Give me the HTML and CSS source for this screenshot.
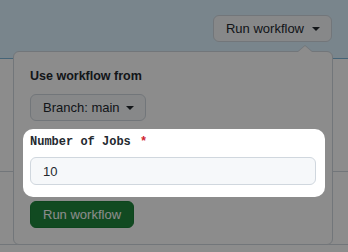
FILE: index.html
```html
<!DOCTYPE html>
<html>
<head>
    <title>Run workflow</title>
    <link rel="stylesheet" href="styles.css">
</head>
<body>
    <div class="flash-header">
        <button class="btn">Run workflow <span class="caret"></span></button>
    </div>

    <div class="run-list">
        <div class="run-row tall"></div>
        <div class="run-row"></div>
    </div>

    <!-- dropdown opened from the Run workflow button -->
    <div class="workflow-menu">
        <div class="menu-title">Use workflow from</div>
        <button class="btn branch-btn">Branch: main <span class="caret"></span></button>

        <div class="spotlight">
            <label class="field-label" for="jobs">Number of Jobs <span class="required">*</span></label>
            <input class="field-input" id="jobs" type="text" value="10">
        </div>

        <button class="btn btn-primary">Run workflow</button>
    </div>
</body>
</html>
```

FILE: styles.css
```css
body {
    font-family: "Liberation Sans", Arial, sans-serif;
    margin: 0;
    padding: 0;
    background: #fff;
    color: #24292f;
    height: 252px;
    overflow: hidden;
}

.flash-header {
    height: 59px;
    background: #dcf2ff;
    border-bottom: 1px solid #7fb6d9;
    display: flex;
    justify-content: flex-end;
    align-items: flex-start;
    padding: 15px 16px 0 0;
    box-sizing: border-box;
}

.btn {
    font-family: inherit;
    font-size: 13px;
    color: #24292f;
    background: #f6f8fa;
    border: 1px solid #d0d7de;
    border-radius: 6px;
    height: 27px;
    padding: 0 11px 0 12px;
    display: inline-flex;
    align-items: center;
    gap: 8px;
    cursor: pointer;
}

.caret {
    width: 0;
    height: 0;
    border-top: 4px solid #24292f;
    border-left: 4px solid transparent;
    border-right: 4px solid transparent;
}

.run-row {
    height: 72px;
    border-bottom: 1px solid #d0d7de;
}

.run-row.tall {
    height: 112px;
}

.workflow-menu {
    position: absolute;
    top: 51px;
    left: 13px;
    width: 320px;
    height: 194px;
    box-sizing: border-box;
    background: #fff;
    border: 1px solid #d0d7de;
    border-radius: 6px;
    padding: 16px 16px 15px 16px;
    display: flex;
    flex-direction: column;
    align-items: flex-start;
}

.workflow-menu::before,
.workflow-menu::after {
    content: "";
    position: absolute;
    right: 20px;
    width: 0;
    height: 0;
    border-left: 7px solid transparent;
    border-right: 7px solid transparent;
}

.workflow-menu::before {
    top: -7px;
    border-bottom: 6px solid #d0d7de;
}

.workflow-menu::after {
    top: -6px;
    border-bottom: 6px solid #fff;
}

.menu-title {
    font-size: 12.5px;
    font-weight: bold;
    line-height: 16px;
}

.branch-btn {
    margin-top: 10px;
    gap: 6px;
    padding: 0 11px 0 12px;
}

/* highlighted form group, everything else is dimmed */
.spotlight {
    position: relative;
    z-index: 10;
    align-self: stretch;
    margin: 8px -9px 0 -7px;
    padding: 5px 9px 12px 7px;
    background: #fff;
    border-radius: 10px;
    box-shadow: 0 0 0 9999px rgba(0, 0, 0, 0.45);
    display: flex;
    flex-direction: column;
    gap: 7px;
}

.field-label {
    font-family: "Liberation Mono", monospace;
    font-size: 12px;
    font-weight: bold;
    line-height: 16px;
}

.required {
    color: #cf222e;
    margin-left: 2px;
}

.field-input {
    height: 28px;
    box-sizing: border-box;
    background: #f6f8fa;
    border: 1px solid #d0d7de;
    border-radius: 6px;
    padding: 0 12px;
    font-family: "Liberation Sans", Arial, sans-serif;
    font-size: 13px;
    color: #24292f;
}

.btn-primary {
    margin-top: 4px;
    padding: 0 12px;
    background: #1f883d;
    border-color: #1a7f37;
    color: #fff;
}
```
